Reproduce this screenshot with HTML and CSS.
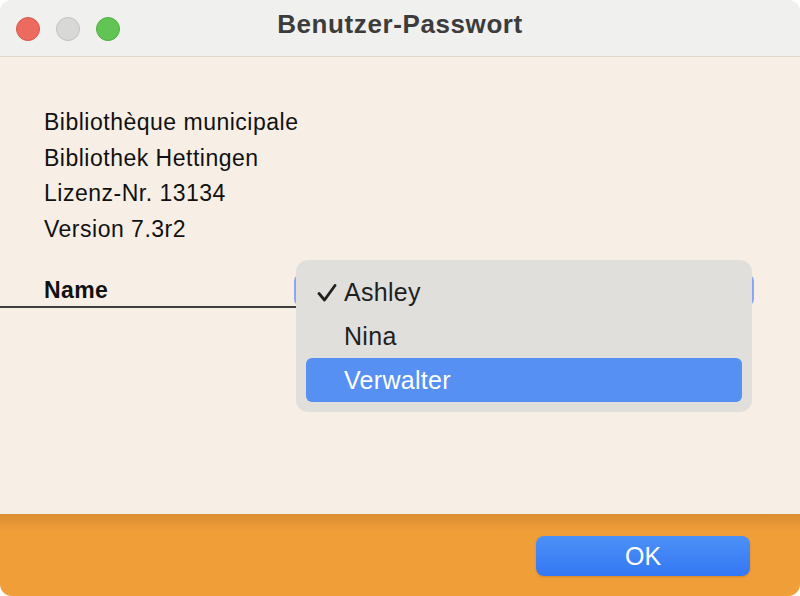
FILE: index.html
```html
<!DOCTYPE html>
<html lang="de">
<head>
<meta charset="utf-8">
<title>Benutzer-Passwort</title>
<link rel="stylesheet" href="styles.css">
</head>
<body>
<div class="window">
  <header class="titlebar">
    <div class="lights">
      <span class="light red"></span>
      <span class="light gray"></span>
      <span class="light green"></span>
    </div>
    <div class="title">Benutzer-Passwort</div>
    <div></div>
  </header>
  <main class="content">
    <div class="info">
      <div>Bibliothèque municipale</div>
      <div>Bibliothek Hettingen</div>
      <div>Lizenz-Nr. 13134</div>
      <div>Version 7.3r2</div>
    </div>
    <div class="name-row">
      <div class="label">Name</div>
      <div class="select">
        <div class="popup">
          <div class="item">
            <svg class="check" width="20" height="18" viewBox="0 0 20 18"><path d="M2 9.5 L7.5 16 L18 1.5" fill="none" stroke="#1f1f1f" stroke-width="2.8" stroke-linecap="round" stroke-linejoin="round"/></svg>
            <span>Ashley</span>
          </div>
          <div class="item"><span>Nina</span></div>
          <div class="item selected"><span>Verwalter</span></div>
        </div>
      </div>
    </div>
  </main>
  <footer class="footer">
    <button class="ok">OK</button>
  </footer>
</div>
</body>
</html>
```
FILE: styles.css
```css
html, body {
  margin: 0;
  padding: 0;
  background: #ffffff;
}
body {
  font-family: "Liberation Sans", Arial, sans-serif;
}
.window {
  width: 800px;
  height: 596px;
  border-radius: 12px;
  overflow: hidden;
  display: flex;
  flex-direction: column;
  background: #f7efe6;
}
.titlebar {
  height: 56px;
  flex: none;
  background: #f0f0ee;
  border-bottom: 1px solid #e2d6c9;
  display: grid;
  grid-template-columns: 1fr auto 1fr;
  align-items: center;
}
.lights {
  display: flex;
  gap: 16px;
  padding-left: 16px;
  padding-top: 1px;
}
.light {
  width: 22px;
  height: 22px;
  border-radius: 50%;
  display: block;
}
.red { background: #ec6a5e; border: 1px solid #d5584c; }
.gray { background: #d8d8d6; border: 1px solid #c2c2bf; }
.green { background: #61c454; border: 1px solid #4fae43; }
.title {
  font-weight: bold;
  font-size: 26px;
  letter-spacing: 0.6px;
  color: #3c3c3c;
  margin-top: -8px;
}
.content {
  flex: 1;
  padding-top: 48px;
}
.info {
  padding-left: 44px;
  font-size: 23px;
  letter-spacing: 0.5px;
  line-height: 35.5px;
  color: #111;
}
.name-row {
  margin-top: 28px;
  display: flex;
  align-items: flex-start;
}
.label {
  width: 252px;
  padding-left: 44px;
  height: 31px;
  line-height: 31px;
  border-bottom: 2px solid #3e3e3e;
  font-weight: bold;
  font-size: 23px;
  letter-spacing: 0.4px;
  color: #111;
}
.select {
  position: relative;
  width: 456px;
  height: 28px;
  border: 2px solid #87a7f4;
  border-radius: 7px;
  margin-top: -1px;
  margin-left: -2px;
}
.popup {
  position: absolute;
  left: 0;
  top: -16px;
  width: 436px;
  padding: 10px;
  background: #e0dfdc;
  border-radius: 12px;
  display: flex;
  flex-direction: column;
}
.item {
  position: relative;
  height: 44px;
  line-height: 44px;
  padding-left: 38px;
  font-size: 25px;
  letter-spacing: 0.3px;
  color: #1f1f1f;
  border-radius: 6px;
}
.item.selected {
  background: #5590f2;
  color: #ffffff;
}
.check {
  position: absolute;
  left: 11px;
  top: 14px;
}
.footer {
  height: 82px;
  flex: none;
  background: linear-gradient(to bottom, #db8f33 0px, #f09e38 18px, #f09e38 100%);
  display: flex;
  justify-content: flex-end;
  align-items: flex-start;
  padding-right: 50px;
  box-sizing: border-box;
  padding-top: 22px;
}
.ok {
  width: 214px;
  height: 40px;
  border: none;
  border-radius: 8px;
  background: linear-gradient(to bottom, #4b91f7, #3477f4);
  color: #ffffff;
  font-family: "Liberation Sans", Arial, sans-serif;
  font-size: 25px;
  padding: 0;
  box-shadow: 0 1px 2px rgba(120, 70, 0, 0.25);
}
```
